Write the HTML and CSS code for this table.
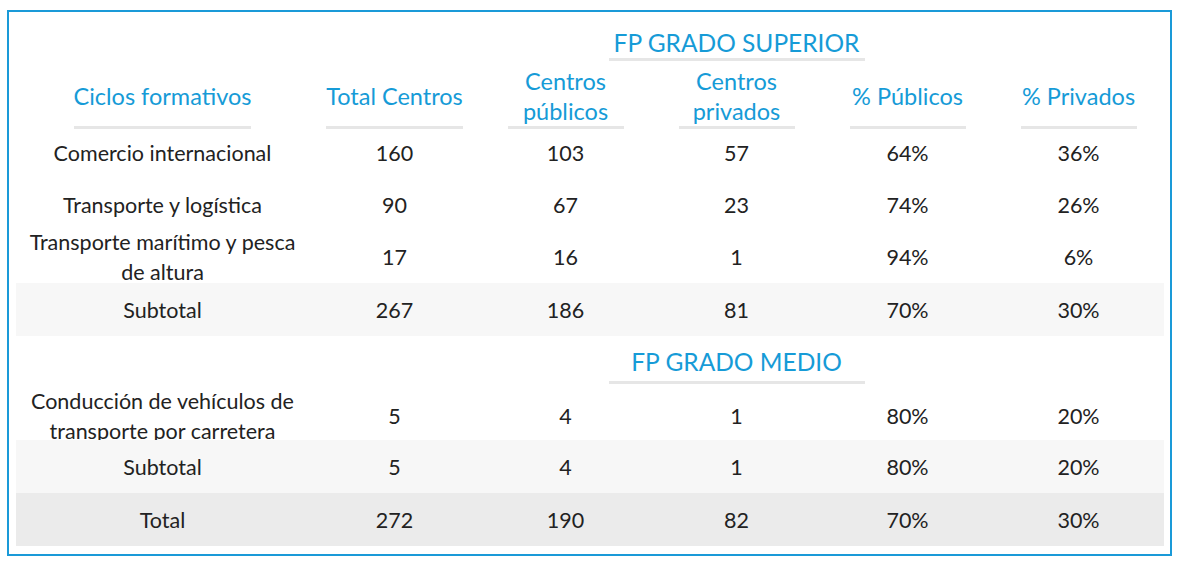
FILE: index.html
```html
<!DOCTYPE html>
<html lang="es">
<head>
<meta charset="utf-8">
<title>FP centros</title>
<link rel="stylesheet" href="styles.css">
</head>
<body>
<div class="frame">
  <div class="row title-row top">
    <div class="title-cell"><span class="title">FP GRADO SUPERIOR</span></div>
  </div>
  <div class="row head-row">
    <div class="hcell"><span class="hl">Ciclos formativos</span></div>
    <div class="hcell"><span class="hl">Total Centros</span></div>
    <div class="hcell"><span class="hl">Centros<br>públicos</span></div>
    <div class="hcell"><span class="hl">Centros<br>privados</span></div>
    <div class="hcell"><span class="hl">% Públicos</span></div>
    <div class="hcell"><span class="hl">% Privados</span></div>
  </div>
  <div class="row data r1">
    <div>Comercio internacional</div><div>160</div><div>103</div><div>57</div><div>64%</div><div>36%</div>
  </div>
  <div class="row data r2">
    <div>Transporte y logística</div><div>90</div><div>67</div><div>23</div><div>74%</div><div>26%</div>
  </div>
  <div class="row data r3">
    <div>Transporte marítimo y pesca<br>de altura</div><div>17</div><div>16</div><div>1</div><div>94%</div><div>6%</div>
  </div>
  <div class="row data band sub">
    <div>Subtotal</div><div>267</div><div>186</div><div>81</div><div>70%</div><div>30%</div>
  </div>
  <div class="row title-row mid">
    <div class="title-cell"><span class="title">FP GRADO MEDIO</span></div>
  </div>
  <div class="row data r4">
    <div>Conducción de vehículos de<br>transporte por carretera</div><div>5</div><div>4</div><div>1</div><div>80%</div><div>20%</div>
  </div>
  <div class="row data band sub">
    <div>Subtotal</div><div>5</div><div>4</div><div>1</div><div>80%</div><div>20%</div>
  </div>
  <div class="row data band total">
    <div>Total</div><div>272</div><div>190</div><div>82</div><div>70%</div><div>30%</div>
  </div>
</div>
</body>
</html>
```

FILE: styles.css
```css
html, body {
  margin: 0;
  padding: 0;
  background: #ffffff;
}

body {
  font-family: "Lato", "Open Sans", "Liberation Sans", sans-serif;
  color: #222222;
}

.frame {
  box-sizing: border-box;
  width: 1165px;
  margin: 10px 0 0 7px;
  border: 2px solid #1a9ad8;
  padding: 0 6px 8px 7px;
}

.row {
  display: grid;
  grid-template-columns: 293px repeat(5, 171px);
}

.title-row .title-cell {
  grid-column: 4;
  display: flex;
  justify-content: center;
}

.title {
  flex: none;
  box-sizing: border-box;
  width: 256px;
  text-align: center;
  font-size: 24.5px;
  line-height: 30px;
  color: #169bd7;
  border-bottom: 3px solid #e6e6e6;
  white-space: nowrap;
}

.title-row.top {
  padding-top: 16px;
}

.title-row.mid {
  padding-top: 11px;
}

.title-row.mid .title {
  padding-bottom: 4px;
}

.head-row {
  padding-top: 5px;
}

.hcell {
  display: flex;
  justify-content: center;
}

.hl {
  display: flex;
  align-items: center;
  justify-content: center;
  box-sizing: border-box;
  min-width: 116px;
  height: 63px;
  padding-bottom: 1px;
  text-align: center;
  font-size: 23.5px;
  line-height: 30px;
  color: #169bd7;
  border-bottom: 3px solid #e6e6e6;
  white-space: nowrap;
}

.data {
  align-items: center;
  font-size: 21.5px;
  line-height: 30px;
  text-align: center;
}

.data > div {
  white-space: nowrap;
}

.r1 { grid-template-rows: 47px; padding-bottom: 3px; }
.r2 { grid-template-rows: 52px; }
.r3 { grid-template-rows: 52px; }
.r4 { grid-template-rows: 48px; padding-top: 8px; }

.band {
  position: relative;
  grid-template-rows: 53px;
}

.band.sub {
  background: #f7f7f7;
}

.band.total {
  background: #ebebeb;
}
```
